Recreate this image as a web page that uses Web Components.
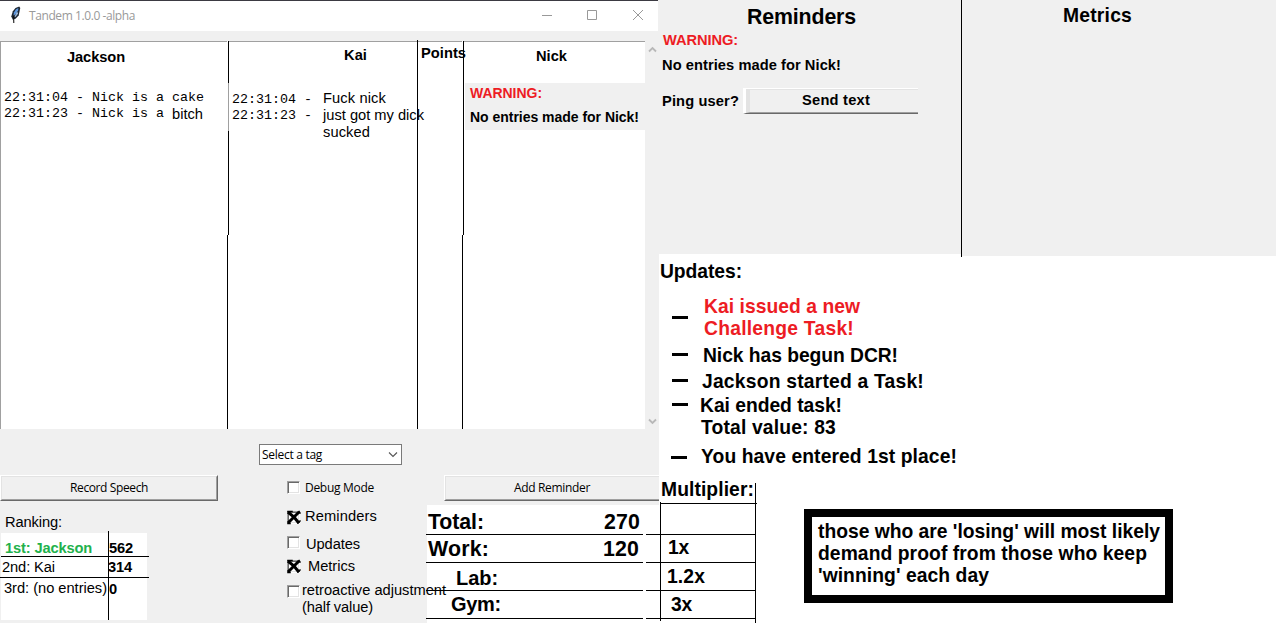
<!DOCTYPE html>
<html lang="en">
<head>
<meta charset="utf-8">
<title>Tandem 1.0.0 -alpha</title>
<style>
html,body{margin:0;padding:0;background:#fff}
body{width:1276px;height:623px;overflow:hidden;font-family:"Liberation Sans",Arial,sans-serif;color:#000}
</style>
</head>
<body>
<tandem-app></tandem-app>
<script>
const make = (name, html, ready) => {
  const t = document.createElement('template');
  t.innerHTML = html;
  customElements.define(name, class extends HTMLElement {
    constructor() {
      super();
      this.attachShadow({mode: 'open'}).append(t.content.cloneNode(true));
    }
    connectedCallback() { if (ready) ready.call(this, this.shadowRoot); }
  });
};

/* One line of text: s = size, l = line height, w = advance width */
make('fit-text', `<style>
:host{display:block;flex:none;white-space:pre;line-height:20px;font-size:14.67px;width:max-content}
:host([b]){font-weight:700}
:host([mono]){font-family:"Liberation Mono",monospace;font-size:13.33px;line-height:16px}
:host([ui]){font-family:"Open Sans","Noto Sans",sans-serif;font-size:12px}
:host([red]){color:#ed1c24}
:host([green]){color:#22b14c}
</style><span><slot></slot></span>`, function (r) {
  const s = this.getAttribute('s'), l = this.getAttribute('l'), w = +this.getAttribute('w');
  if (s) this.style.fontSize = s + 'px';
  if (l) this.style.lineHeight = l + 'px';
  if (w) {
    const span = r.querySelector('span');
    this.style.letterSpacing = (w - span.getBoundingClientRect().width) / this.textContent.length + 'px';
  }
});

make('col-rule', `<style>
:host{display:flex;flex-direction:column;flex:none;width:2px}
i{display:block;width:1px;background:#000}
.a{height:42px;align-self:flex-end}.g{height:48px;align-self:flex-end}
:host([faded]) .g{background:#a0a0a0}
.b{height:104px;align-self:flex-end}.c{flex:1}
</style><i class="a"></i><i class="g"></i><i class="b"></i><i class="c"></i>`);

make('tk-button', `<style>
:host{display:block;box-sizing:border-box;height:26px;background:#f0f0f0;border-top:1px solid #fff;border-left:1px solid #fff;border-bottom:1px solid #696969;border-right:1px solid #696969}
div{box-sizing:border-box;height:24px;border:1px solid #e3e3e3;border-right-color:#a0a0a0;border-bottom-color:#a0a0a0}
:host([cut]),:host([cut]) div{border-right:0}
:host([wide]){border-left-width:3px}
:host([wide]) div{border-left-width:4px}
</style><div><slot></slot></div>`);

make('tk-check', `<style>
:host{display:flex;flex:none;width:160px}
.box{box-sizing:border-box;width:13px;height:13px;flex:none;background:#fff;border:1px solid #a0a0a0;border-right-color:#fff;border-bottom-color:#fff;position:relative;box-shadow:inset 1px 1px #696969,inset -1px -1px #e3e3e3}
svg{display:none;position:absolute;left:-2px;top:-3px}
:host([on]) svg{display:block}
</style><div class="box"><svg width="17" height="18" viewBox="0 0 17 18" fill="none" stroke="#000" stroke-linecap="square"><path stroke-width="3" d="M3 4L8 8L12 13M12 4L8 8L3 13"/><path stroke-width="1.5" d="M2 2.5H6M4 14.5H2M12 14L14 12M13 2.5L14 4"/></svg></div><slot></slot>`);

make('title-bar', `<style>
:host{display:flex;box-sizing:border-box;width:658px;height:31px;background:#fff;border-top:1px solid #3b3a42;flex:none}
.q{margin:5px 0 0 9px;flex:none}
fit-text{color:#999;margin:5px 0 0 7px}
.c{margin-left:auto;margin-top:8px}
</style><svg class="q" width="13" height="18" viewBox="0 0 12 17"><path d="M9.5.5L10.5 2L9 9L6 12L3.5 13L2 10L3.5 5L6 2Z" fill="#1c2530"/><path d="M8.7 1.8L6.5 3L4.6 6L4 9.5L6.5 7L8.5 4Z" fill="#5d96dc"/><path d="M7.5 5L5 10L6 10.5L8.5 7Z" fill="#9bb8d9"/><path d="M4.2 9L4.4 16" stroke="#111" fill="none"/></svg>
<fit-text ui w="106">Tandem 1.0.0 -alpha</fit-text>
<svg class="c" width="118" height="13" viewBox="0 0 118 13" fill="none" stroke="#999"><path d="M2 6.5H12M47.5 1.5H56.5V10.5H47.5ZM93 1L103 11M103 1L93 11"/></svg>`);

make('entry-board', `<style>
:host{display:flex;height:388px;margin-top:10px;width:659px;flex:none}
section{box-sizing:border-box;background:#fff;border-top:1px solid #a0a0a0;flex:none}
.j{width:227px;border-left:1px solid #a0a0a0;padding:5px 0 0 3px}
.k{width:188px;padding:3px 0 0 3px}
.p{width:44px;padding:1px 0 0 3px}
.n{width:181px;padding-top:4px}
.row{display:flex}
.one{width:1px;background:#000;margin-top:-1px;flex:none}
.stack{display:flex;flex-direction:column;margin-left:3px;margin-top:-2px}
.warn{background:#f0f0f0;height:47px;margin:17px 0 0 1px;padding-left:5px}
.over{position:relative;z-index:1}
col-rule{background:#fff}
.bar{width:14px;display:flex;flex-direction:column;justify-content:space-between;align-items:center;padding:5px 0 4px;box-sizing:border-box}
</style>
<section class="j"><fit-text b w="58" style="margin-left:63px">Jackson</fit-text>
<fit-text mono w="200" style="margin-top:23px">22:31:04 - Nick is a cake</fit-text>
<div class="row"><fit-text mono w="168">22:31:23 - Nick is a </fit-text><fit-text w="31" l="16">bitch</fit-text></div></section>
<col-rule faded></col-rule>
<section class="k"><fit-text b w="23" style="margin-left:112px">Kai</fit-text>
<div class="row" style="margin-top:27px"><div><fit-text mono w="88">22:31:04 - </fit-text><fit-text mono w="88">22:31:23 - </fit-text></div>
<div class="stack over"><fit-text l="17" w="63">Fuck nick</fit-text><fit-text l="17" w="101">just got my dick</fit-text><fit-text l="17" w="47">sucked</fit-text></div></div></section>
<div class="one"></div>
<section class="p"><fit-text class="over" b w="45">Points</fit-text></section>
<col-rule></col-rule>
<section class="n"><fit-text b w="31" style="margin-left:72px">Nick</fit-text>
<div class="warn"><fit-text b red s="14" w="72">WARNING:</fit-text><fit-text b s="14" w="169" style="margin-top:4px">No entries made for Nick!</fit-text></div></section>
<div class="bar"><svg width="9" height="7" viewBox="0 0 9 7" fill="none" stroke="#b8b8b8" stroke-width="1.8"><path d="M1 5.5L4.5 2L8 5.5"/></svg><svg width="9" height="7" viewBox="0 0 9 7" fill="none" stroke="#b8b8b8" stroke-width="1.8"><path d="M1 1.5L4.5 5L8 1.5"/></svg></div>`);

make('rank-table', `<style>
:host{display:grid;grid-template-columns:107px 1px 41px;width:149px;height:89px;margin-top:-1px;background:linear-gradient(#fff,#fff) 1px 2px/146px 87px no-repeat}
.n,.v{display:flex;flex-direction:column}
.l{background:#000;margin-left:1px;width:1px}
hr{border:0;margin:0;height:1px;background:#000;flex:none}
</style>
<div class="n"><fit-text b green w="87" style="margin:7px 0 0 5px;height:18px">1st: Jackson</fit-text><hr style="margin-left:1px;width:107px"><fit-text w="53" style="margin-left:2px;height:20px">2nd: Kai</fit-text><hr style="width:108px"><fit-text w="103" style="margin-left:4px">3rd: (no entries)</fit-text></div>
<div class="l"></div>
<div class="v"><fit-text b w="24" style="margin:7px 0 0 1px;height:18px">562</fit-text><hr><fit-text b w="24" style="height:20px">314</fit-text><hr><fit-text b w="8" style="margin:1px 0 0 1px">0</fit-text></div>`);

make('points-table', `<style>
:host{display:block;height:118px;margin-top:4px;background:linear-gradient(#fff,#fff) 1px 0/100% 100% no-repeat}
.r{display:flex;box-sizing:border-box;height:28px;background:linear-gradient(#000,#000) 0 100%/217px 1px no-repeat,linear-gradient(#000,#000) 220px 100%/13px 1px no-repeat}
.r.f{height:30px}
</style>
<div class="r f"><fit-text b s="21.33" l="24" w="56" style="margin:5px 0 0 2px">Total:</fit-text><fit-text b s="21.33" l="24" w="36" style="margin:5px 0 0 120px">270</fit-text></div>
<div class="r"><fit-text b s="21.33" l="24" w="61" style="margin:2px 0 0 2px">Work:</fit-text><fit-text b s="21.33" l="24" w="36" style="margin:2px 0 0 114px">120</fit-text></div>
<div class="r"><fit-text b s="20" l="24" w="42" style="margin:3px 0 0 30px">Lab:</fit-text></div>
<div class="r"><fit-text b s="20" l="24" w="50" style="margin:1px 0 0 25px">Gym:</fit-text></div>`);

make('control-area', `<style>
:host{display:grid;grid-template-columns:250px 176px 233px;height:194px;flex:none}
.l{padding-top:46px}
.m{position:relative;z-index:2;padding:15px 0 0 9px}
.r{padding-top:46px}
.combo{display:flex;box-sizing:border-box;width:143px;height:21px;border:1px solid #7a7a7a;background:#fff;padding-left:2px}
.combo svg{margin:6px 0 0 auto}
tk-check{margin-left:28px}
</style>
<div class="l"><tk-button style="width:218px"><fit-text ui l="22" w="78" style="margin-left:68px">Record Speech</fit-text></tk-button>
<fit-text w="57" style="margin:11px 0 0 5px">Ranking:</fit-text><rank-table></rank-table></div>
<div class="m"><div class="combo"><fit-text ui w="60">Select a tag</fit-text><svg width="13" height="8" viewBox="0 0 13 8" fill="none" stroke="#555" stroke-width="1.1"><path d="M1 1.5L5 5.5L9 1.5"/></svg></div>
<tk-check style="height:13px;margin-top:16px"><fit-text ui w="69" style="margin:-3px 0 0 5px">Debug Mode</fit-text></tk-check>
<tk-check on style="height:13px;margin-top:17px"><fit-text w="72" style="margin:-5px 0 0 5px">Reminders</fit-text></tk-check>
<tk-check style="height:13px;margin-top:12px"><fit-text w="54" style="margin:-2px 0 0 6px">Updates</fit-text></tk-check>
<tk-check on style="height:13px;margin-top:11px"><fit-text w="47" style="margin:-4px 0 0 8px">Metrics</fit-text></tk-check>
<tk-check style="margin-top:12px"><div style="margin:-3px 0 0 2px"><fit-text l="17" w="144">retroactive adjustment</fit-text><fit-text l="17" w="71">(half value)</fit-text></div></tk-check></div>
<div class="r"><tk-button cut style="margin-left:18px"><fit-text ui l="22" w="76" style="margin-left:68px">Add Reminder</fit-text></tk-button><points-table></points-table></div>`);

make('tandem-window', `<style>:host{display:flex;flex-direction:column;width:659px;height:623px;background:#f0f0f0;flex:none}</style>
<title-bar></title-bar><entry-board></entry-board><control-area></control-area>`);

make('top-panels', `<style>
:host{display:flex;height:257px;flex:none}
.r{width:302px;height:254px;background:#f0f0f0}
.l{width:1px;background:#000}
.m{width:314px;height:256px;background:#f0f0f0}
.ping{display:flex;margin:11px 0 0 3px}
</style>
<div class="r"><fit-text b s="21.33" l="24" w="109" style="margin:0 0 0 88px;padding-top:5px">Reminders</fit-text>
<fit-text b red w="75" style="margin:1px 0 0 4px">WARNING:</fit-text>
<fit-text b w="179" style="margin:5px 0 0 3px">No entries made for Nick!</fit-text>
<div class="ping"><fit-text b w="77" style="margin-top:5px">Ping user?</fit-text><tk-button wide cut style="width:175px;margin:2px 0 0 4px"><fit-text b w="68" style="margin-left:52px">Send text</fit-text></tk-button></div></div>
<div class="l"></div>
<div class="m"><fit-text b s="19.3" l="22" w="69" style="padding:5px 0 0 101px">Metrics</fit-text></div>`);

make('update-item', `<style>
:host{display:flex}
i{display:block;width:16px;height:3px;background:#000;flex:none;margin-top:var(--dash,8px);margin-left:var(--x,13px)}
</style><i></i><div><slot></slot></div>`);

make('updates-panel', `<style>
:host{display:block;height:222px;padding-top:4px;box-sizing:border-box;flex:none}
</style>
<fit-text b s="19.3" l="22" w="82" style="margin-left:1px">Updates:</fit-text>
<update-item style="--dash:20px;margin-top:13px"><fit-text b red s="19.3" l="22" w="156" style="margin-left:16px">Kai issued a new</fit-text><fit-text b red s="19.3" l="22" w="150" style="margin-left:16px">Challenge Task!</fit-text></update-item>
<update-item style="margin-top:5px"><fit-text b s="19.3" l="22" w="195" style="margin-left:15px">Nick has begun DCR!</fit-text></update-item>
<update-item style="margin-top:4px"><fit-text b s="19.3" l="22" w="222" style="margin-left:14px">Jackson started a Task!</fit-text></update-item>
<update-item style="margin-top:2px"><fit-text b s="19.3" l="22" w="142" style="margin-left:12px">Kai ended task!</fit-text><fit-text b s="19.3" l="22" w="135" style="margin-left:13px">Total value: 83</fit-text></update-item>
<update-item style="--dash:10px;--x:12px;margin-top:7px"><fit-text b s="19.3" l="22" w="256" style="margin-left:14px">You have entered 1st place!</fit-text></update-item>`);

make('multiplier-table', `<style>
:host{display:block;width:98px;height:144px;flex:none;background:linear-gradient(#000,#000) 1px 23px/1px 119px no-repeat,linear-gradient(#000,#000) 96px 4px/1px 140px no-repeat}
.r{box-sizing:border-box;height:28px;width:96px;border-bottom:1px solid #000}
</style>
<div class="r" style="height:25px;width:97px;margin-left:1px"><fit-text b s="19.3" l="22" w="93" style="margin-left:1px">Multiplier:</fit-text></div>
<div class="r" style="height:31px"></div>
<div class="r"><fit-text b s="19.3" l="22" w="21" style="padding:2px 0 0 9px">1x</fit-text></div>
<div class="r"><fit-text b s="19.3" l="22" w="38" style="padding:3px 0 0 8px">1.2x</fit-text></div>
<div class="r"><fit-text b s="19.3" l="22" w="21" style="padding:3px 0 0 12px">3x</fit-text></div>`);

make('note-box', `<style>
:host{display:block;box-sizing:border-box;width:369px;height:94px;border:8px solid #000;padding:4px 0 0 6px;margin:30px 0 0 47px}
</style>
<fit-text b s="19.3" l="22" w="342">those who are 'losing' will most likely</fit-text><fit-text b s="19.3" l="22" w="329">demand proof from those who keep</fit-text><fit-text b s="19.3" l="22" w="171">'winning' each day</fit-text>`);

make('tandem-app', `<style>
:host{display:flex;width:1276px;height:623px;overflow:hidden}
main{display:flex;flex-direction:column;width:617px;flex:none;background:#fff}
.b{display:flex}
</style><tandem-window></tandem-window><main><top-panels></top-panels><updates-panel></updates-panel><div class="b"><multiplier-table></multiplier-table><note-box></note-box></div></main>`);
</script>
</body>
</html>
